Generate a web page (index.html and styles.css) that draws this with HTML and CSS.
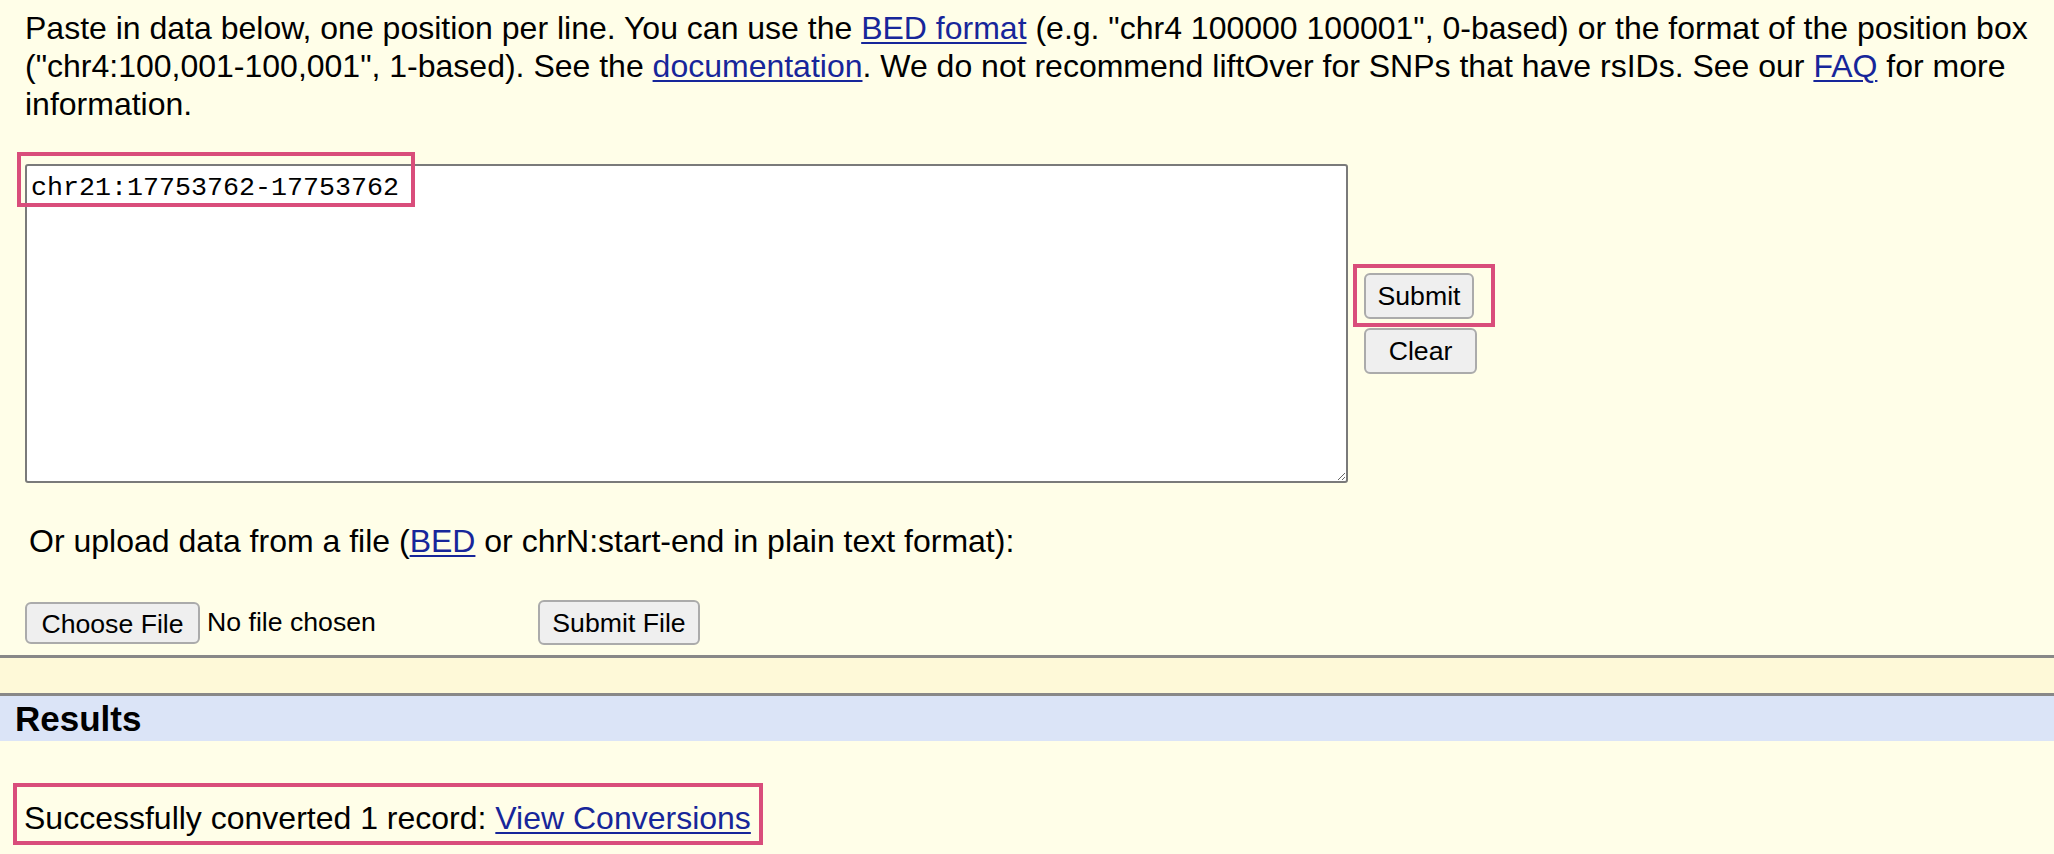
FILE: index.html
```html
<!DOCTYPE html>
<html>
<head>
<meta charset="utf-8">
<link rel="stylesheet" href="styles.css">
</head>
<body>
<div class="main">
  <p class="intro">Paste in data below, one position per line. You can use the <a href="#">BED format</a> (e.g. "chr4 100000 100001", 0-based) or the format of the position box ("chr4:100,001-100,001", 1-based). See the <a href="#">documentation</a>. We do not recommend liftOver for SNPs that have rsIDs. See our <a href="#">FAQ</a> for more information.</p>

  <div class="paste-row">
    <div class="ta-wrap">
      <textarea class="ta" spellcheck="false">chr21:17753762-17753762</textarea>
      <span class="mark mark-text"></span>
    </div>
    <div class="btn-col">
      <div class="btn-mark-wrap">
        <button class="btn btn-submit">Submit</button>
        <span class="mark mark-submit"></span>
      </div>
      <button class="btn btn-clear">Clear</button>
    </div>
  </div>

  <p class="upload-text">Or upload data from a file (<a href="#">BED</a> or chrN:start-end in plain text format):</p>

  <div class="file-row">
    <div class="file-input">
      <button class="btn btn-file">Choose File</button>
      <span class="file-name">No file chosen</span>
    </div>
    <button class="btn btn-submit-file">Submit File</button>
  </div>
</div>

<div class="divider-band"></div>

<div class="results-head">Results</div>

<div class="results-body">
  <div class="result-box">Successfully converted 1 record: <a href="#">View Conversions</a></div>
</div>
</body>
</html>
```

FILE: styles.css
```css
html, body {
  margin: 0;
  padding: 0;
  background: #fffee8;
}
body {
  font-family: "Liberation Sans", Arial, sans-serif;
  color: #000;
  font-size: 32px;
}
a {
  color: #17269a;
  text-decoration: underline;
  text-underline-offset: 3px;
  text-decoration-thickness: 2px;
}
.main {
  padding: 9px 10px 0 25px;
}
.intro {
  margin: 0;
  line-height: 38px;
}
.paste-row {
  display: flex;
  align-items: center;
  gap: 16px;
  margin-top: 41px;
}
.ta-wrap {
  position: relative;
  width: 1323px;
  height: 319px;
}
.ta {
  box-sizing: border-box;
  width: 100%;
  height: 100%;
  margin: 0;
  border: 2px solid #7a7a7a;
  border-radius: 3px;
  background: #fff;
  padding: 7px 4px 4px 4px;
  font-family: "Liberation Mono", "Courier New", monospace;
  font-size: 26.67px;
  color: #000;
  resize: both;
  display: block;
}
.mark {
  position: absolute;
  border: 4px solid #d94d7b;
  pointer-events: none;
  box-sizing: border-box;
}
.mark-text {
  left: -8px;
  top: -12px;
  width: 398px;
  height: 55px;
}
.btn-col {
  display: flex;
  flex-direction: column;
  align-items: flex-start;
  gap: 9px;
}
.btn-mark-wrap {
  position: relative;
  display: flex;
}
.mark-submit {
  left: -11px;
  top: -9px;
  right: -21px;
  bottom: -8px;
}
.btn {
  font-family: "Liberation Sans", Arial, sans-serif;
  font-size: 26.67px;
  color: #000;
  background: #efefef;
  border: 2px solid #ababab;
  border-radius: 6px;
  padding: 0 12px;
  height: 46px;
  line-height: 40px;
  margin: 0;
}
.btn-submit {
  width: 110px;
  padding: 0;
}
.btn-clear {
  width: 113px;
  padding: 0;
}
.upload-text {
  margin: 39px 0 0 4px;
  line-height: 38px;
}
.file-row {
  display: flex;
  align-items: center;
  margin-top: 40px;
  padding-bottom: 10px;
}
.file-input {
  display: flex;
  align-items: center;
  width: 513px;
}
.btn-file {
  height: 42px;
  width: 175px;
  padding: 0;
}
.file-name {
  margin-left: 7px;
  font-size: 26.67px;
}
.btn-submit-file {
  height: 45px;
  width: 162px;
  padding: 0;
}
.divider-band {
  height: 35px;
  background: #fef9d8;
  border-top: 3px solid #888;
  border-bottom: 3px solid #888;
}
.results-head {
  background: #dbe4f7;
  font-weight: bold;
  font-size: 35px;
  height: 45px;
  line-height: 45px;
  padding-left: 15px;
}
.results-body {
  padding: 42px 0 0 13px;
}
.result-box {
  display: inline-block;
  border: 4px solid #d94d7b;
  padding: 12px 8px 4px 7px;
  line-height: 38px;
}
```
